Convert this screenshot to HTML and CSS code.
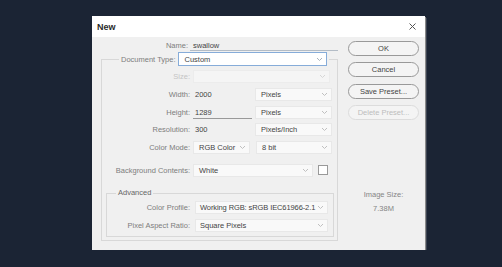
FILE: index.html
```html
<!DOCTYPE html>
<html lang="en">
<head>
    <meta charset="UTF-8">
    <meta name="viewport" content="width=device-width, initial-scale=1.0">
    <title>New</title>
    <link rel="stylesheet" href="styles.css">
</head>
<body>
    <div class="page">
        <div class="dialog">
            <div class="titlebar">
                <span class="title">New</span>
                <svg class="close" width="7" height="7" viewBox="0 0 7 7">
                    <path d="M0.5 0.5 L6.5 6.5 M6.5 0.5 L0.5 6.5" stroke="#555" stroke-width="1" fill="none"/>
                </svg>
            </div>
            <div class="content">
                <div class="main">
                    <div class="name-row">
                        <span class="label name-label">Name:</span>
                        <span class="name-value">swallow</span>
                    </div>
                    <fieldset class="group">
                        <legend class="doc-legend">
                            <div class="doc-type">
                                <span class="label">Document Type:</span>
                                <div class="select select-focus select-doc">
                                    <span>Custom</span>
                                    <svg class="chev" width="5" height="3" viewBox="0 0 5 3"><path d="M0 0 L2.5 2.5 L5 0" stroke="#a9b2bc" fill="none"/></svg>
                                </div>
                            </div>
                        </legend>

                        <div class="row">
                            <span class="label label-disabled">Size:</span>
                            <div class="controls">
                                <div class="select select-disabled select-size">
                                    <span></span>
                                    <svg class="chev" width="5" height="3" viewBox="0 0 5 3"><path d="M0 0 L2.5 2.5 L5 0" stroke="#d6d6d6" fill="none"/></svg>
                                </div>
                            </div>
                        </div>
                        <div class="row">
                            <span class="label">Width:</span>
                            <div class="controls">
                                <div class="field">2000</div>
                                <div class="select select-unit">
                                    <span>Pixels</span>
                                    <svg class="chev" width="5" height="3" viewBox="0 0 5 3"><path d="M0 0 L2.5 2.5 L5 0" stroke="#c0c0c0" fill="none"/></svg>
                                </div>
                            </div>
                        </div>
                        <div class="row">
                            <span class="label">Height:</span>
                            <div class="controls">
                                <div class="field field-active">1289</div>
                                <div class="select select-unit">
                                    <span>Pixels</span>
                                    <svg class="chev" width="5" height="3" viewBox="0 0 5 3"><path d="M0 0 L2.5 2.5 L5 0" stroke="#c0c0c0" fill="none"/></svg>
                                </div>
                            </div>
                        </div>
                        <div class="row">
                            <span class="label">Resolution:</span>
                            <div class="controls">
                                <div class="field">300</div>
                                <div class="select select-unit">
                                    <span>Pixels/Inch</span>
                                    <svg class="chev" width="5" height="3" viewBox="0 0 5 3"><path d="M0 0 L2.5 2.5 L5 0" stroke="#c0c0c0" fill="none"/></svg>
                                </div>
                            </div>
                        </div>
                        <div class="row">
                            <span class="label">Color Mode:</span>
                            <div class="controls controls-wide">
                                <div class="select select-mode">
                                    <span>RGB Color</span>
                                    <svg class="chev" width="5" height="3" viewBox="0 0 5 3"><path d="M0 0 L2.5 2.5 L5 0" stroke="#c0c0c0" fill="none"/></svg>
                                </div>
                                <div class="select select-bits">
                                    <span>8 bit</span>
                                    <svg class="chev" width="5" height="3" viewBox="0 0 5 3"><path d="M0 0 L2.5 2.5 L5 0" stroke="#c0c0c0" fill="none"/></svg>
                                </div>
                            </div>
                        </div>
                        <div class="row row-background">
                            <span class="label">Background Contents:</span>
                            <div class="controls controls-check">
                                <div class="select select-bg">
                                    <span>White</span>
                                    <svg class="chev" width="5" height="3" viewBox="0 0 5 3"><path d="M0 0 L2.5 2.5 L5 0" stroke="#c0c0c0" fill="none"/></svg>
                                </div>
                                <div class="swatch"></div>
                            </div>
                        </div>

                        <fieldset class="group advanced">
                            <legend class="adv-legend">Advanced</legend>
                            <div class="row adv-row">
                                <span class="label">Color Profile:</span>
                                <div class="controls">
                                    <div class="select select-adv">
                                        <span class="select-text">Working RGB: sRGB IEC61966-2.1</span>
                                        <svg class="chev" width="5" height="3" viewBox="0 0 5 3"><path d="M0 0 L2.5 2.5 L5 0" stroke="#c0c0c0" fill="none"/></svg>
                                    </div>
                                </div>
                            </div>
                            <div class="row adv-row">
                                <span class="label">Pixel Aspect Ratio:</span>
                                <div class="controls">
                                    <div class="select select-adv">
                                        <span>Square Pixels</span>
                                        <svg class="chev" width="5" height="3" viewBox="0 0 5 3"><path d="M0 0 L2.5 2.5 L5 0" stroke="#c0c0c0" fill="none"/></svg>
                                    </div>
                                </div>
                            </div>
                        </fieldset>
                    </fieldset>
                </div>

                <div class="side">
                    <div class="buttons">
                        <div class="btn">OK</div>
                        <div class="btn">Cancel</div>
                        <div class="btn">Save Preset...</div>
                        <div class="btn btn-disabled">Delete Preset...</div>
                    </div>
                    <div class="image-size">
                        <div class="image-size-label">Image Size:</div>
                        <div class="image-size-value">7.38M</div>
                    </div>
                </div>
            </div>
        </div>
    </div>
</body>
</html>
```

FILE: styles.css
```css
body {
    margin: 0;
    background-color: #1b2434;
    font-family: "Liberation Sans", Arial, sans-serif;
    font-size: 7.5px;
    color: #444;
}
.page {
    padding: 16px 0 0 92px;
}
.dialog {
    width: 333px;
    height: 234px;
    background-color: #f0f0f0;
    box-shadow: 1px 1px 0 #8a8a8a, 2px 2px 0 #3d4452;
    display: flex;
    flex-direction: column;
}
.titlebar {
    height: 21px;
    flex-shrink: 0;
    background-color: #fff;
    display: flex;
    align-items: center;
    justify-content: space-between;
    padding: 0 9px 0 5px;
}
.title {
    font-size: 9px;
    font-weight: bold;
    color: #2a2a2a;
}
.content {
    display: flex;
    gap: 10px;
    padding: 3px 6px 0 9px;
}
.main {
    width: 237px;
}
.label {
    color: #7d7d7d;
    text-align: right;
    white-space: nowrap;
}
.label-disabled {
    color: #c4c4c4;
}

/* name */
.name-row {
    display: flex;
    align-items: center;
    height: 11px;
}
.name-label {
    width: 87px;
}
.name-value {
    width: 148px;
    height: 11px;
    line-height: 11px;
    margin-left: 2px;
    padding-left: 3px;
    box-sizing: border-box;
    border-bottom: 1px solid #b3bcc6;
    color: #444;
}

/* group boxes */
.group {
    margin: 1px 0 0;
    padding: 2px 3px 3px 4px;
    border: 1px solid #d8d8d8;
    min-width: 0;
}
.doc-legend {
    margin-left: 13px;
    padding: 0 2px;
}
.doc-type {
    display: flex;
    align-items: center;
    gap: 3px;
}
.advanced {
    margin-top: 9px;
    padding: 1px 0 2px 0;
}
.adv-legend {
    margin-left: 9px;
    padding: 0 2px;
    color: #666;
    line-height: 10px;
}

/* rows */
.row {
    display: grid;
    grid-template-columns: 84px 1fr;
    column-gap: 3px;
    align-items: center;
    height: 17.7px;
}
.row-background {
    margin-top: 5px;
}
.adv-row {
    grid-template-columns: 83px 1fr;
    column-gap: 5px;
    height: 17.5px;
}
.controls {
    display: flex;
    align-items: center;
    gap: 3px;
}
.controls-wide {
    gap: 6px;
}
.controls-check {
    gap: 5px;
}

/* inputs */
.select {
    height: 13px;
    box-sizing: border-box;
    border: 1px solid #e8e8e8;
    background-color: #f9f9f9;
    display: flex;
    align-items: center;
    justify-content: space-between;
    padding: 0 4px 0 5px;
    color: #444;
    white-space: nowrap;
}
.select-focus {
    height: 14px;
    border-color: #86acd9;
    background-color: #fff;
}
.select-disabled {
    background-color: #f5f5f5;
    border-color: #ececec;
}
.select-doc { width: 149px; }
.select-size { width: 137px; }
.select-unit { width: 77px; }
.select-mode { width: 57px; }
.select-bits { width: 76px; }
.select-bg { width: 120px; }
.select-adv {
    width: 133px;
    padding-left: 4px;
}
.select-text {
    letter-spacing: -0.1px;
}
.chev {
    flex-shrink: 0;
}
.field {
    width: 59px;
    height: 13px;
    line-height: 13px;
    box-sizing: border-box;
    padding-left: 2px;
    color: #444;
}
.field-active {
    border-bottom: 1px solid #999;
}
.swatch {
    width: 10px;
    height: 10px;
    box-sizing: border-box;
    border: 1px solid #999;
    background-color: #fff;
}

/* side */
.side {
    width: 71px;
}
.buttons {
    display: flex;
    flex-direction: column;
    gap: 6.3px;
    margin-top: 1px;
}
.btn {
    height: 15px;
    box-sizing: border-box;
    border: 1px solid #999;
    border-radius: 8px;
    background-color: #f4f4f4;
    text-align: center;
    line-height: 13px;
    color: #444;
}
.btn-disabled {
    border-color: #dcdcdc;
    color: #bdbdbd;
}
.image-size {
    margin-top: 68px;
    text-align: center;
    line-height: 14px;
    color: #858585;
}
```
